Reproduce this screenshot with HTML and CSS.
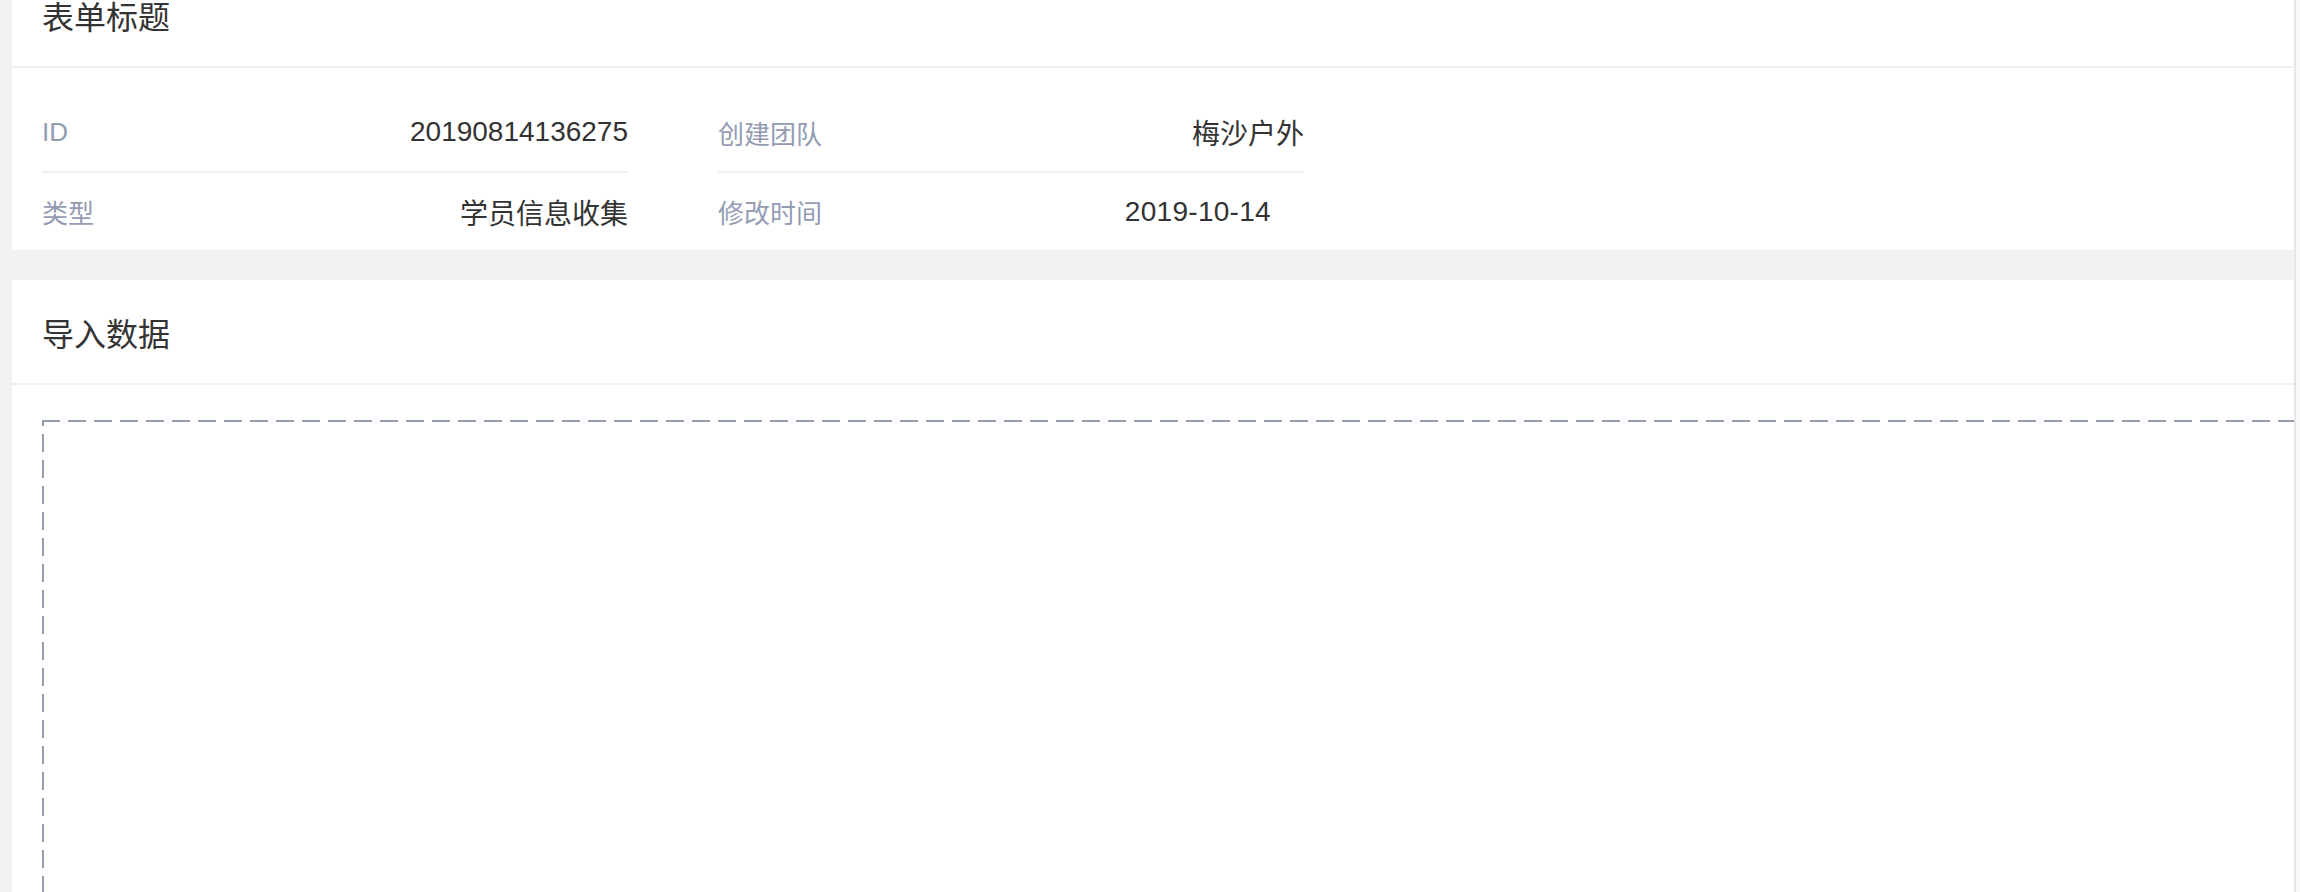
FILE: index.html
```html
<!DOCTYPE html>
<html lang="zh-CN">
<head>
<meta charset="utf-8">
<title>表单详情</title>
<link rel="stylesheet" href="styles.css">
</head>
<body>
<div class="page">
  <div class="viewport">
    <div class="content">
      <section class="card card-first">
        <header class="card-header">表单标题</header>
        <div class="card-body info-body">
          <div class="info-grid">
            <div class="info-row"><span class="label">ID</span><span class="value">20190814136275</span></div>
            <div class="info-row"><span class="label">创建团队</span><span class="value">梅沙户外</span></div>
            <div class="info-row last"><span class="label">类型</span><span class="value">学员信息收集</span></div>
            <div class="info-row last"><span class="label">修改时间</span><span class="value value-date">2019-10-14</span></div>
          </div>
        </div>
      </section>
      <section class="card">
        <header class="card-header">导入数据</header>
        <div class="card-body import-body">
          <div class="dropzone"></div>
        </div>
      </section>
    </div>
  </div>
  <div class="scroll-track"></div>
</div>
</body>
</html>
```

FILE: styles.css
```css
html, body {
  margin: 0;
  padding: 0;
}
body {
  background: #f2f2f2;
  font-family: "Liberation Sans", "Noto Sans CJK SC", sans-serif;
  color: #333;
  height: 892px;
  overflow: hidden;
}
.page {
  display: flex;
  height: 892px;
}
.viewport {
  flex: 1;
  overflow: hidden;
  padding-left: 12px;
}
.content {
  width: 2330px;
  display: flex;
  flex-direction: column;
  gap: 30px;
}
.scroll-track {
  width: 4px;
  border-left: 2px solid #e6e6e6;
  background: #f8f8f8;
}
.card {
  background: #fff;
}
.card-first {
  margin-top: -37px;
}
.card-header {
  height: 103px;
  display: flex;
  align-items: center;
  padding-left: 30px;
  font-size: 32px;
  color: #333;
  border-bottom: 2px solid #f0f0f0;
}
.info-body {
  padding: 25px 30px 0;
}
.info-grid {
  display: grid;
  grid-template-columns: 586px 586px;
  column-gap: 90px;
}
.info-row {
  height: 78px;
  display: flex;
  align-items: center;
  justify-content: space-between;
  border-bottom: 2px solid #f0f0f0;
}
.info-row.last {
  height: 77px;
  border-bottom: none;
}
.label {
  font-size: 26px;
  color: #939cb3;
}
.value {
  font-size: 28px;
  color: #333;
}
.value-date {
  margin-right: 33px;
  letter-spacing: 0.3px;
}
.import-body {
  padding: 35px 30px 0;
}
.dropzone {
  height: 700px;
  background-image:
    linear-gradient(to right, #959cae 18px, transparent 18px),
    linear-gradient(to bottom, #959cae 18px, transparent 18px),
    linear-gradient(#959cae, #959cae);
  background-size: 26px 2px, 2px 26px, 2px 5px;
  background-position: 0 0, 0 14px, 0 0;
  background-repeat: repeat-x, repeat-y, no-repeat;
}
```
